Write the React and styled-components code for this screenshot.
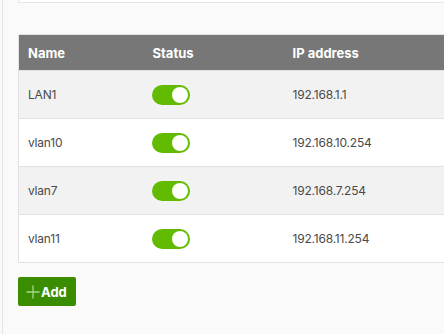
import React from 'react'
import styled, { createGlobalStyle } from 'styled-components'

const GlobalStyle = createGlobalStyle`
  html, body {
    margin: 0;
    padding: 0;
    background: #fafafa;
    font-family: Inter, "Noto Sans", sans-serif;
  }
  #root {
    height: 334px;
    overflow: hidden;
  }
`

const Page = styled.div`
  display: flex;
  height: 334px;
  overflow: hidden;
`

const SideRail = styled.div`
  flex: none;
  width: 2px;
  border-right: 1px solid #e4e4e4;
`

const Content = styled.main`
  flex: 1;
  padding-left: 15px;
  min-width: 0;
`

const TopPanel = styled.div`
  height: 2px;
  background: #fff;
  border: 1px solid #e6e6e6;
  border-top: none;
  margin-right: -40px;
`

const Table = styled.table`
  margin-top: 31px;
  width: 520px;
  border-collapse: collapse;
  border: 1px solid #e2e2e2;
  font-size: 12px;
  color: #4a4a4a;
`

const HeadCell = styled.th`
  height: 36px;
  padding: 0 0 0 9px;
  background: #777;
  color: #fff;
  font-weight: 700;
  font-size: 13px;
  text-align: left;
  width: ${p => p.$w || 'auto'};
  box-sizing: border-box;
`

const Row = styled.tr`
  background: ${p => (p.$alt ? '#f2f2f2' : '#fff')};
  border-top: 1px solid #e2e2e2;
`

const Cell = styled.td`
  height: 47px;
  padding: 0 0 0 ${p => p.$pad || '9px'};
  letter-spacing: -0.2px;
`

const Toggle = styled.span`
  display: inline-flex;
  align-items: center;
  justify-content: flex-end;
  width: 38px;
  height: 20px;
  padding: 0 2px;
  box-sizing: border-box;
  border-radius: 10px;
  background: #62bb00;
  vertical-align: middle;

  &::after {
    content: '';
    width: 16px;
    height: 16px;
    border-radius: 50%;
    background: #fff;
  }
`

const AddButton = styled.button`
  display: flex;
  align-items: center;
  gap: 1px;
  margin-top: 14px;
  height: 29px;
  width: 58px;
  padding: 0 0 0 8px;
  border: none;
  border-radius: 2px;
  background: #3a8d00;
  color: #fff;
  font-family: Inter, "Noto Sans", sans-serif;
  font-weight: 700;
  font-size: 13px;
  cursor: pointer;
`

const rows = [
  { name: 'LAN1', ip: '192.168.1.1' },
  { name: 'vlan10', ip: '192.168.10.254' },
  { name: 'vlan7', ip: '192.168.7.254' },
  { name: 'vlan11', ip: '192.168.11.254' },
]

export default function App() {
  return (
    <>
      <GlobalStyle />
      <Page>
        <SideRail />
        <Content>
          <TopPanel />
          <Table>
            <thead>
              <tr>
                <HeadCell $w="125px">Name</HeadCell>
                <HeadCell $w="140px">Status</HeadCell>
                <HeadCell>IP address</HeadCell>
              </tr>
            </thead>
            <tbody>
              {rows.map((r, i) => (
                <Row key={r.name} $alt={i % 2 === 0}>
                  <Cell>{r.name}</Cell>
                  <Cell $pad="8px"><Toggle /></Cell>
                  <Cell>{r.ip}</Cell>
                </Row>
              ))}
            </tbody>
          </Table>
          <AddButton>
            <svg width="14" height="14" viewBox="0 0 14 14">
              <path d="M7 0.5v13M0.5 7h13" stroke="#a6d886" strokeWidth="1.3" fill="none" />
            </svg>
            Add
          </AddButton>
        </Content>
      </Page>
    </>
  )
}
